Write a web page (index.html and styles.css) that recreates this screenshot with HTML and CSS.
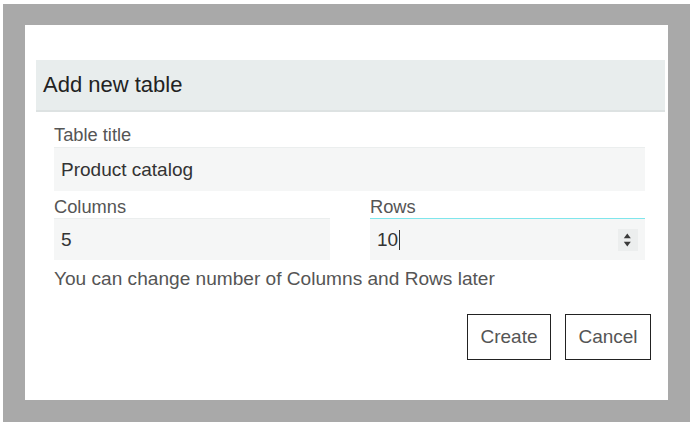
FILE: index.html
```html
<!DOCTYPE html>
<html lang="en">
<head>
<meta charset="utf-8">
<title>Add new table</title>
<link rel="stylesheet" href="styles.css">
</head>
<body>
<div class="backdrop">
  <div class="dialog">
    <div class="dialog-header">Add new table</div>
    <div class="dialog-body">
      <div class="field">
        <div class="label">Table title</div>
        <div class="input input-tall">Product catalog</div>
      </div>
      <div class="field-row">
        <div class="field">
          <div class="label">Columns</div>
          <div class="input">5</div>
        </div>
        <div class="field">
          <div class="label">Rows</div>
          <div class="input input-focus">
            <span class="value">10<span class="caret"></span></span>
            <span class="spinner">
              <svg width="20" height="22" viewBox="0 0 20 22">
                <path d="M5.8 9.3 L9.3 4.5 L12.8 9.3 Z" fill="#3a3a3a"/>
                <path d="M5.8 12.8 L9.3 17.6 L12.8 12.8 Z" fill="#3a3a3a"/>
              </svg>
            </span>
          </div>
        </div>
      </div>
      <div class="hint">You can change number of Columns and Rows later</div>
      <div class="actions">
        <button class="btn btn-create">Create</button>
        <button class="btn btn-cancel">Cancel</button>
      </div>
    </div>
  </div>
</div>
</body>
</html>
```

FILE: styles.css
```css
html, body {
  margin: 0;
  padding: 0;
  background: #ffffff;
}
body {
  font-family: "Liberation Sans", Arial, sans-serif;
}
.backdrop {
  margin: 4px 0 0 3px;
  width: 687px;
  height: 418px;
  box-sizing: border-box;
  background: #a9a9a9;
  padding: 21px 22px 22px 22px;
}
.dialog {
  background: #ffffff;
  height: 375px;
  padding-top: 35px;
  box-sizing: border-box;
}
.dialog-header {
  margin: 0 3px 0 11px;
  height: 50px;
  line-height: 50px;
  background: #e8eded;
  border-bottom: 2px solid #dde2e2;
  padding-left: 7px;
  font-size: 22px;
  color: #222;
}
.dialog-body {
  padding: 12px 23px 0 29px;
}
.field {
  display: flex;
  flex-direction: column;
}
.label {
  font-size: 18.3px;
  line-height: 21px;
  color: #555;
}
.input {
  margin-top: 1px;
  height: 41px;
  background: #f5f6f6;
  border-top: 1px solid #ebeeee;
  padding: 0 7px;
  display: flex;
  align-items: center;
  font-size: 19px;
  color: #333;
}
.input-tall {
  margin-top: 2px;
  height: 43px;
}
.field-row {
  margin-top: 5px;
  display: grid;
  grid-template-columns: 276px 275px;
  column-gap: 40px;
}
.input-focus {
  border-top-color: #7fe6ec;
  justify-content: space-between;
  padding-right: 7px;
}
.value {
  display: flex;
  align-items: center;
}
.caret {
  display: inline-block;
  width: 0;
  height: 20px;
  border-left: 1px solid #333;
  margin-left: 1px;
}
.spinner {
  width: 20px;
  height: 22px;
  background: #eceeee;
  display: flex;
}
.hint {
  margin-top: 8px;
  font-size: 19.1px;
  line-height: 22px;
  color: #555;
}
.actions {
  margin-top: 24px;
  display: flex;
  justify-content: flex-end;
  gap: 14px;
  margin-right: -6px;
}
.btn {
  height: 46px;
  background: #fff;
  border: 1px solid #222;
  border-radius: 0;
  font-family: "Liberation Sans", Arial, sans-serif;
  font-size: 19px;
  color: #555;
}
.btn-create {
  width: 84px;
}
.btn-cancel {
  width: 86px;
}
```
